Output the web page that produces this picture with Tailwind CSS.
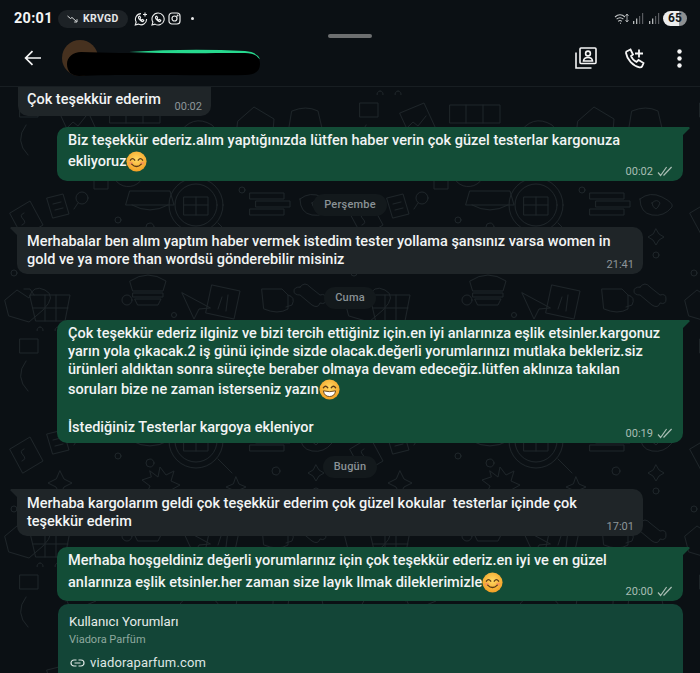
<!DOCTYPE html>
<html lang="tr">
<head>
  <meta charset="UTF-8" />
  <title>Sohbet</title>
  <script src="https://cdn.jsdelivr.net/npm/@tailwindcss/browser@4"></script>
</head>
<body class="bg-[#0b1014]">
  <!-- shared emoji -->
  <svg width="0" height="0" class="absolute">
    <defs>
      <radialGradient id="face" cx="50%" cy="40%" r="60%">
        <stop offset="0%" stop-color="#ffd862" />
        <stop offset="100%" stop-color="#f2a024" />
      </radialGradient>
      <symbol id="smile" viewBox="0 0 24 24">
        <circle cx="12" cy="12" r="11.5" fill="url(#face)" />
        <ellipse cx="5.5" cy="14" rx="2.6" ry="1.7" fill="#f58a5c" opacity=".7" />
        <ellipse cx="18.5" cy="14" rx="2.6" ry="1.7" fill="#f58a5c" opacity=".7" />
        <path d="M5 10.5q2.5-3.4 5 0M14 10.5q2.5-3.4 5 0" fill="none" stroke="#5b3a17" stroke-width="1.5" stroke-linecap="round" />
        <path d="M6.5 15q5.5 5.5 11 0" fill="none" stroke="#5b3a17" stroke-width="1.5" stroke-linecap="round" />
      </symbol>
      <symbol id="grin" viewBox="0 0 24 24">
        <circle cx="12" cy="12" r="11.5" fill="url(#face)" />
        <path d="M5 10q2.5-3.4 5 0M14 10q2.5-3.4 5 0" fill="none" stroke="#5b3a17" stroke-width="1.5" stroke-linecap="round" />
        <path d="M5 13.5q7 2 14 0q-1 6.5-7 6.5t-7-6.5z" fill="#fff" stroke="#5b3a17" stroke-width="1" />
      </symbol>
      <symbol id="ticks" viewBox="0 0 16 11">
        <path d="M1 6.5l2.6 3L9.6 1M6.5 9.5L14.6 1" fill="none" stroke="currentColor" stroke-width="1.2" />
      </symbol>
      <pattern id="doodles" width="340" height="236" patternUnits="userSpaceOnUse" patternTransform="translate(0 95)">
        <g fill="none" stroke="#1e2529" stroke-width="1" stroke-linejoin="round" stroke-linecap="round">
          <path d="M10 118l20-12 13 24-20 12zM24 118q-5 2-1 6t-1 6" />
          <path d="M47 103l16-4 6 20-16 4zM53 109l8-2M55 115l8-2" />
          <circle cx="82" cy="103" r="6" /><path d="M78 108l-4 6" />
          <path d="M130 96h40l4 14h-48zM132 110q18 10 36 0" />
          <circle cx="196" cy="110" r="27" /><circle cx="196" cy="110" r="21" /><path d="M218 128l14 14M184 102h24v18h-24zM184 110h24M196 102v18" />
          <path d="M250 98h34v6h-34zM256 106h34v6h-34zM250 114h34v6h-34z" />
          <path d="M300 104q10-8 22-2t10 10q-8 10-20 8t-12-16zM312 108q5-5 8 0q-2 5-4 6q-4-2-4-6z" />
          <path d="M5 205l12-10 12 8q4-14 16-8t-2 20l-14 12-20-6z" />
          <path d="M30 200h40l-5 26H36zM24 194h6l4 6M40 232a3 3 0 1 0 .1 0M58 232a3 3 0 1 0 .1 0M33 213h35M45 200v26M56 200v26" />
          <path d="M130 186q18-12 36 0l-3 10h-30zM133 198h30v4h-30zM135 204h26l-3 6h-20z" />
          <path d="M212 190l28 6-6 28-28-6zM218 214l4-12M226 216l2-16" />
          <path d="M182 198l12 26 5-10 11-1z" />
          <path d="M262 194h20l6 6v14q-10 6-24 0zM288 200q8 2 4 10l-6 2" />
          <path d="M300 192q5-6 10 0l10 8q6-2 6 4t-6 4q-2 6-8 2l-12-10q-6 0-6-4t6-4z" />
          <circle cx="100" cy="166" r="4" /><circle cx="36" cy="170" r="3" /><circle cx="118" cy="125" r="3" /><circle cx="242" cy="95" r="3" /><circle cx="316" cy="160" r="3" /><circle cx="14" cy="178" r="3" /><circle cx="150" cy="132" r="4" /><circle cx="276" cy="140" r="4" /><circle cx="127" cy="205" r="5" /><circle cx="174" cy="220" r="2.5" />
          <path d="M60 140l4 8 8 4-8 4-4 8-4-8-8-4 8-4zM236 146l3 7 7 3-7 3-3 7-3-7-7-3 7-3zM316 134l3 5 5 3-5 3-3 5-3-5-5-3 5-3z" />
          <path d="M150 140l8 6 2-10 6 8 8-4-3 10 9 4-9 5 3 10-9-4-6 8-3-10-10 1 4-9-8-6 9-3z" />
          <path d="M26 30q-12 16 2 30M20 8h18v14H20zM60 18l24-10 12 26-24 10zM66 34l7-7 5 4 8-10" />
          <path d="M110 10h50v18h-50zM126 10v18M143 10v18" />
          <path d="M178 40q14-22 34-10 14 12 6 28-12 14-28 8-16-8-12-26zM190 40l20 10" />
          <path d="M238 26l16-14 20 12-2 24-22 6-14-12z" />
          <path d="M292 16q14-6 26 0l6 26-20 12-16-14z" />
          <path d="M100 64l-6 6v24h14V70zM94 72h-8M108 78h8" />
          <path d="M120 62a16 16 0 1 0 22 22M130 66a8 8 0 1 0 10 10" />
        </g>
      </pattern>
    </defs>
  </svg>

  <div class="relative w-[700px] h-[673px] overflow-hidden bg-[#0b1014] text-white font-['Roboto',sans-serif]">
    <!-- status bar -->
    <div class="h-[30px] pt-[7px] pl-[14px] pr-[13px] flex items-center justify-between">
      <div class="flex items-center">
        <span class="text-[14.5px] font-bold leading-[18px] tracking-[.3px] text-[#f4f5f5]">20:01</span>
        <span class="ml-[5px] w-[70px] h-[18px] rounded-full bg-[#1d2226] flex items-center justify-center gap-[5px] text-[10.5px] font-bold tracking-[.3px] text-[#e4e6e7]">
          <svg width="11" height="8" viewBox="0 0 11 8" fill="none" stroke="#d8dadb" stroke-width="1"><path d="M.5 1l3 2.5L5 2.5 9.5 6.5M10 4.2v2.8H7.2" /></svg>
          KRVGD
        </span>
        <span class="ml-[6px] flex items-center gap-[3px]">
          <svg width="14" height="14" viewBox="0 0 14 14" fill="none" stroke="#eceded" stroke-width="1.1"><path d="M7 1.6A5.6 5.6 0 0 0 2.2 10L1.3 13l3-.9A5.6 5.6 0 0 0 12.600 7M4.800 4.500q-.8 1 .4 2.800t3 2.300q1.400 0 1.700-1.400L8.400 7.500l-.7.7Q6.600 7.700 6 6.300l.6-.8L5.700 4.200zM11 .5v4M9 2.500h4" /></svg>
          <svg width="14" height="14" viewBox="0 0 14 14" fill="none" stroke="#eceded" stroke-width="1.1"><path d="M7 1a6 6 0 0 0-5.100 9.100L1 13l3-.9A6 6 0 1 0 7 1zM4.800 4.500q-.8 1 .4 2.800t3 2.300q1.400 0 1.700-1.400L8.400 7.500l-.7.7Q6.600 7.700 6 6.300l.6-.8L5.700 4.200z" /></svg>
          <svg width="13" height="13" viewBox="0 0 13 13" fill="none" stroke="#eceded" stroke-width="1.2"><rect x="1" y="1" width="11" height="11" rx="3" /><circle cx="6.5" cy="6.5" r="2.5" /><circle cx="9.6" cy="3.4" r=".4" /></svg>
        </span>
        <span class="ml-[10px] w-[3.5px] h-[3.5px] rounded-full bg-[#e8e9ea]"></span>
      </div>
      <div class="flex items-center">
        <svg width="15" height="12" viewBox="0 0 15 12" fill="none" stroke="#c9cccd" stroke-width="1.1"><path d="M1 4q5-4.500 10 0M2.600 6.200q3.400-3 6.800 0M4.200 8.300q1.800-1.600 3.600 0M6 10.300h1" /><path d="M13 1v8M11.500 3l1.500-2 1.500 2M11.500 7l1.500 2 1.500-2" stroke-width=".8" /></svg>
        <svg class="ml-[4px]" width="11" height="11" viewBox="0 0 11 11" fill="#b5b8ba"><rect x="0" y="8" width="1.3" height="3" /><rect x="3" y="5.5" width="1.3" height="5.5" /><rect x="6" y="3" width="1.2" height="8" opacity=".45" /><rect x="9" y="0" width="1.2" height="11" opacity=".45" /></svg>
        <svg class="ml-[5px]" width="11" height="11" viewBox="0 0 11 11" fill="#b5b8ba"><rect x="0" y="8" width="1.3" height="3" /><rect x="3" y="5.5" width="1.3" height="5.5" /><rect x="6" y="3" width="1.2" height="8" opacity=".45" /><rect x="9" y="0" width="1.2" height="11" opacity=".45" /></svg>
        <span class="ml-[3px] w-[24px] h-[15px] rounded-full bg-[linear-gradient(90deg,#eceded_0,#eceded_65%,#8d9092_65%,#8d9092_100%)] text-[#15191c] text-[12px] font-bold leading-[15px] text-center">65</span>
      </div>
    </div>

    <!-- app bar -->
    <div class="relative h-[57px] border-b border-[#181e22]">
      <div class="absolute left-[328px] top-[4px] w-[44px] h-[4px] rounded-full bg-[#6d6f70]"></div>
      <div class="h-full pl-[24px] pr-[18px] flex items-center justify-between">
        <div class="flex items-center">
          <svg width="18" height="16" viewBox="0 0 18 16" fill="none" stroke="#f5f5f5" stroke-width="1.7"><path d="M17 8H2M8.5 1.2L1.6 8l6.9 6.800" /></svg>
          <!-- avatar and name are scribbled out in the picture -->
          <div class="relative ml-[20px] w-[200px] h-[36px]">
            <div class="absolute left-0 top-0 w-[36px] h-[36px] rounded-full bg-[#46311f]"></div>
            <svg class="absolute left-[5px] top-[7px]" width="196" height="30" viewBox="0 0 196 30">
              <path d="M62 5q60-4 116-1 12 1 15 8l-6-3z" fill="#27d98e" />
              <path d="M14 5C60 7 130 6 178 6c10 0 15 4 15 11s-5 11-15 11C130 29 60 27 12 29 4 29 0 24 0 17S6 5 14 5z" fill="#000" />
            </svg>
          </div>
        </div>
        <div class="flex items-center">
          <svg width="22" height="22" viewBox="0 0 22 22" fill="none" stroke="#f5f5f5" stroke-width="1.6"><rect x="5" y="1" width="16" height="15.5" rx="1" /><path d="M1 5.5V21h15.5" /><circle cx="13" cy="6.5" r="2.4" /><path d="M8.5 14q.3-3.5 4.5-3.5t4.5 3.5z" /></svg>
          <svg class="ml-[28px]" width="20" height="21" viewBox="0 0 20 21" fill="none" stroke="#f5f5f5" stroke-width="1.8"><path d="M1.5 3.500l4-2 2.500 5-2 1.500q1.500 4 5.500 6l2-2 5 3-1.500 3.500q-.5 1-2.500.8C8 18 2 11.500 1 5q0-1 .5-1.500z" /><path d="M14 1.500v8M10 5.500h8" /></svg>
          <svg class="ml-[32px]" width="5" height="19" viewBox="0 0 5 19" fill="#f5f5f5"><circle cx="2.5" cy="2.5" r="2.2" /><circle cx="2.5" cy="9.5" r="2.2" /><circle cx="2.5" cy="16.5" r="2.2" /></svg>
        </div>
      </div>
    </div>

    <!-- chat -->
    <div class="relative h-[586px] overflow-hidden">
      <svg class="absolute left-0 top-[-87px]" width="700" height="673"><rect width="700" height="673" fill="url(#doodles)" /></svg>
      <div class="relative flex flex-col text-[14.5px] font-medium leading-[17.5px] text-[#f2f4f4]">

        <!-- cut off by the app bar -->
        <div class="ml-[18px] w-[193px] h-[29px] bg-[#1f2528] rounded-b-[10px] pl-[9px] flex items-start">
          <span class="mt-[4px]">Çok teşekkür ederim</span>
          <span class="ml-auto mr-[9px] mt-[13px] text-[11px] font-normal leading-[13px] text-[#8d9599]">00:02</span>
        </div>

        <div class="relative mt-[11px] ml-[57px] w-[626px] h-[54px] bg-[#134d37] rounded-[10px] rounded-tr-none pl-[11px] pt-[4px]">
          <svg class="absolute right-[-7px] top-0" width="8" height="9" viewBox="0 0 8 9" fill="#134d37"><path d="M0 0h7q1 .5 .5 1.5L0 9z" /></svg>
          <div class="h-[18px] mt-[1px] tracking-[.03px]">Biz teşekkür ederiz.alım yaptığınızda lütfen haber verin çok güzel testerlar kargonuza</div>
          <div class="h-[21px] flex items-center mt-[1px]">ekliyoruz<svg width="21" height="21"><use href="#smile" /></svg></div>
          <div class="absolute right-[10px] bottom-[3px] flex items-center gap-[4px] text-[11px] font-normal leading-[13px] text-[#a9bdb4]">00:02<svg width="16" height="11"><use href="#ticks" /></svg></div>
        </div>

        <div class="mt-[13px] self-center h-[22px] px-[11px] rounded-[11px] bg-[#13191c] flex items-center text-[11px] font-medium tracking-[.2px] text-[#8a9296]">Perşembe</div>

        <div class="relative mt-[11px] ml-[17px] w-[626px] h-[47px] bg-[#1f2528] rounded-[10px] rounded-tl-none pl-[10px] pt-[6px]">
          <svg class="absolute left-[-7px] top-0" width="8" height="9" viewBox="0 0 8 9" fill="#1f2528"><path d="M8 0H1Q0 .5 .5 1.5L8 9z" /></svg>
          Merhabalar ben alım yaptım haber vermek istedim tester yollama şansınız varsa women in<br />gold ve ya more than wordsü gönderebilir misiniz
          <span class="absolute right-[9px] bottom-[3px] text-[11px] font-normal leading-[13px] text-[#8d9599]">21:41</span>
        </div>

        <div class="mt-[13px] self-center h-[22px] px-[11px] rounded-[11px] bg-[#13191c] flex items-center text-[11px] font-medium tracking-[.2px] text-[#8a9296]">Cuma</div>

        <div class="relative mt-[11px] ml-[57px] w-[626px] h-[123px] bg-[#134d37] rounded-[10px] rounded-tr-none pl-[11px] pt-[5px] leading-[18px]">
          <svg class="absolute right-[-7px] top-0" width="8" height="9" viewBox="0 0 8 9" fill="#134d37"><path d="M0 0h7q1 .5 .5 1.5L0 9z" /></svg>
          <div>Çok teşekkür ederiz ilginiz ve bizi tercih ettiğiniz için.en iyi anlarınıza eşlik etsinler.kargonuz</div>
          <div>yarın yola çıkacak.2 iş günü içinde sizde olacak.değerli yorumlarınızı mutlaka bekleriz.siz</div>
          <div>ürünleri aldıktan sonra süreçte beraber olmaya devam edeceğiz.lütfen aklınıza takılan</div>
          <div class="h-[21px] flex items-center">soruları bize ne zaman isterseniz yazın<svg width="21" height="21"><use href="#grin" /></svg></div>
          <div class="mt-[19px]">İstediğiniz Testerlar kargoya ekleniyor</div>
          <div class="absolute right-[10px] bottom-[3px] flex items-center gap-[4px] text-[11px] font-normal leading-[13px] text-[#a9bdb4]">00:19<svg width="16" height="11"><use href="#ticks" /></svg></div>
        </div>

        <div class="mt-[13px] self-center h-[22px] px-[11px] rounded-[11px] bg-[#13191c] flex items-center text-[11px] font-medium tracking-[.2px] text-[#8a9296]">Bugün</div>

        <div class="relative mt-[11px] ml-[17px] w-[626px] h-[47px] bg-[#1f2528] rounded-[10px] rounded-tl-none pl-[10px] pt-[6px]">
          <svg class="absolute left-[-7px] top-0" width="8" height="9" viewBox="0 0 8 9" fill="#1f2528"><path d="M8 0H1Q0 .5 .5 1.5L8 9z" /></svg>
          <span class="whitespace-pre">Merhaba kargolarım geldi çok teşekkür ederim çok güzel kokular  testerlar içinde çok</span><br />teşekkür ederim
          <span class="absolute right-[9px] bottom-[3px] text-[11px] font-normal leading-[13px] text-[#8d9599]">17:01</span>
        </div>

        <div class="relative mt-[11px] ml-[57px] w-[626px] h-[54px] bg-[#134d37] rounded-[10px] rounded-tr-none pl-[11px] pt-[4px]">
          <svg class="absolute right-[-7px] top-0" width="8" height="9" viewBox="0 0 8 9" fill="#134d37"><path d="M0 0h7q1 .5 .5 1.5L0 9z" /></svg>
          <div class="h-[18px] mt-[1px]">Merhaba hoşgeldiniz değerli yorumlarınız için çok teşekkür ederiz.en iyi ve en güzel</div>
          <div class="h-[21px] flex items-center mt-[2px] tracking-[.03px]">anlarınıza eşlik etsinler.her zaman size layık llmak dileklerimizle<svg width="21" height="21"><use href="#smile" /></svg></div>
          <div class="absolute right-[10px] bottom-[3px] flex items-center gap-[4px] text-[11px] font-normal leading-[13px] text-[#a9bdb4]">20:00<svg width="16" height="11"><use href="#ticks" /></svg></div>
        </div>

        <!-- link preview -->
        <div class="mt-[3px] ml-[58px] w-[625px] h-[90px] bg-[#134537] rounded-[10px] pl-[11px] pt-[10px]">
          <div class="text-[13.2px] leading-[16px] font-normal text-[#e6ecea]">Kullanıcı Yorumları</div>
          <div class="mt-[3px] text-[11px] leading-[14px] font-normal text-[#8fa99f]">Viadora Parfüm</div>
          <div class="mt-[7px] ml-[1px] flex items-center gap-[5px] text-[13px] leading-[17px] font-normal tracking-[.15px] text-[#dfe7e4]">
            <svg width="15" height="8" viewBox="0 0 15 8" fill="none" stroke="#dfe7e4" stroke-width="1.2"><path d="M6.5 1H4a3 3 0 0 0 0 6h2.5M8.5 1H11a3 3 0 0 1 0 6H8.5M4.5 4h6" /></svg>
            viadoraparfum.com
          </div>
        </div>
      </div>
    </div>
  </div>
</body>
</html>
